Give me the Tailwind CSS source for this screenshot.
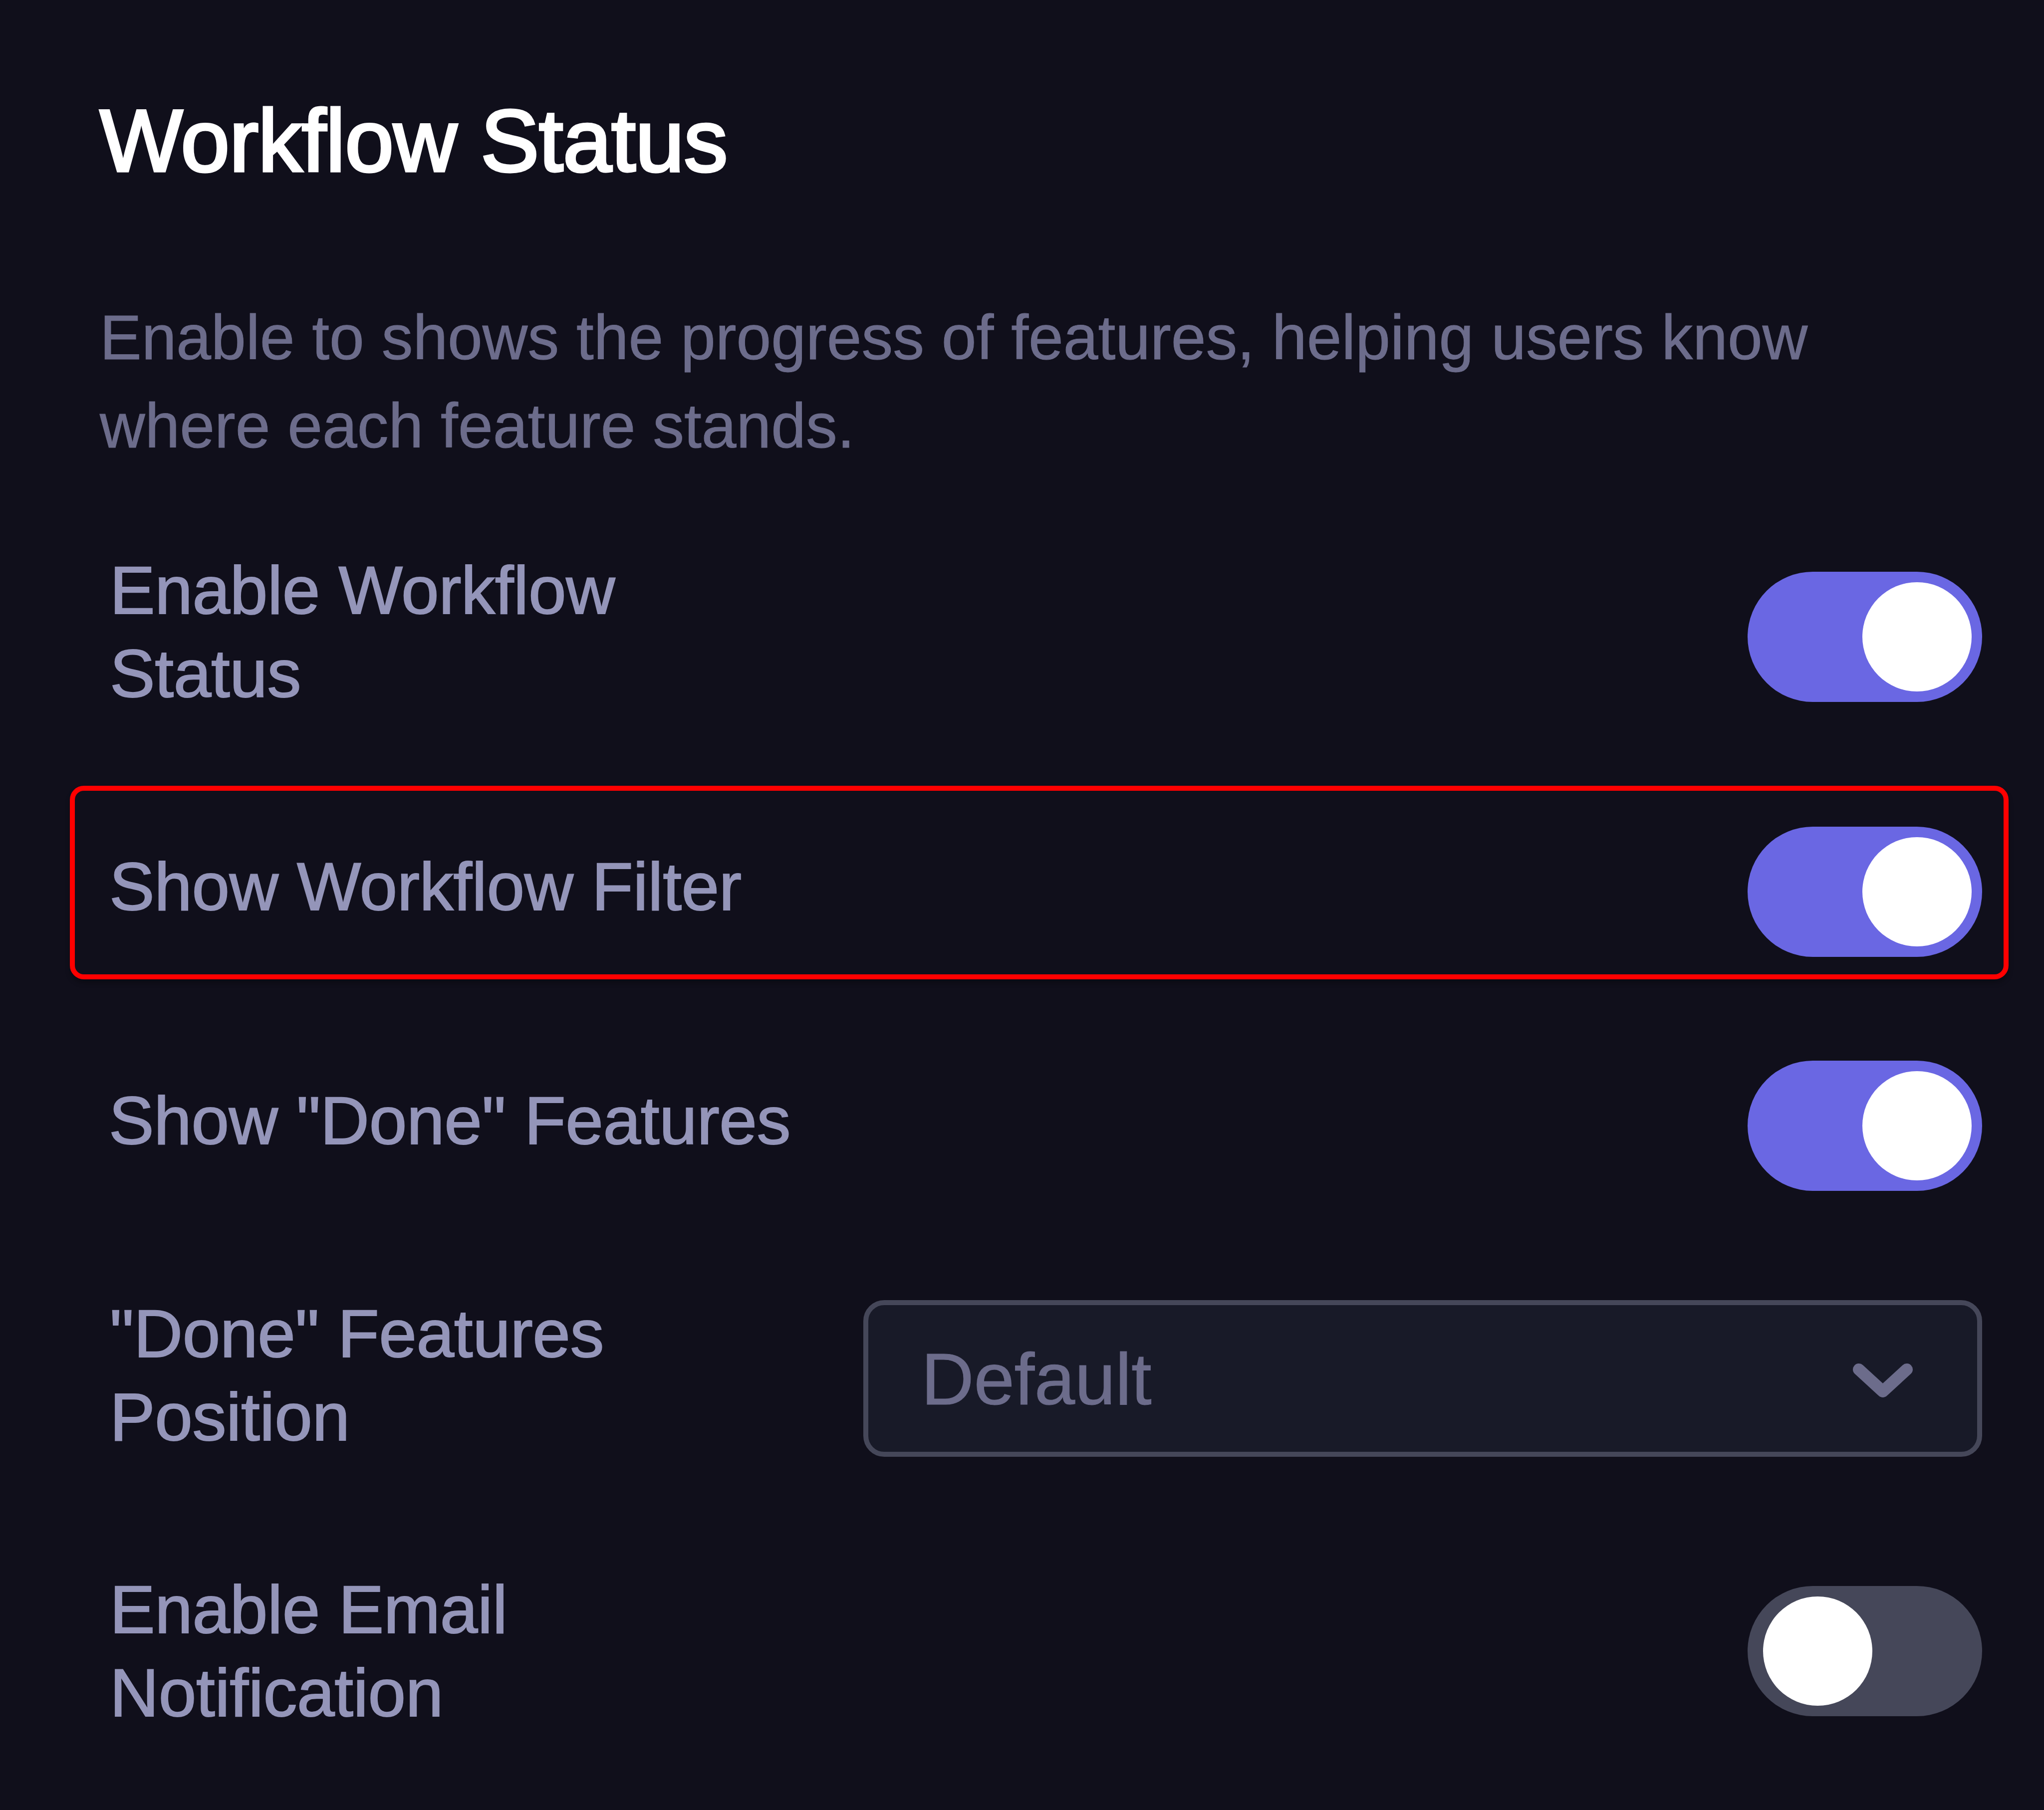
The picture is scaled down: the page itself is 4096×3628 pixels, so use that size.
<!DOCTYPE html>
<html lang="en">
<head>
  <meta charset="UTF-8" />
  <meta name="viewport" content="width=device-width, initial-scale=1" />
  <title>Workflow Status</title>
  <script src="https://cdn.jsdelivr.net/npm/@tailwindcss/browser@4"></script>
  <style>
    body {
      font-family: 'Liberation Sans', Arial, sans-serif;
    }
  </style>
</head>
<body class="bg-[#100f1b] w-[4096px] h-[3628px] overflow-hidden">
  <main class="flex flex-col pt-[182px]">
    <header class="pl-[200px]">
      <h1 class="text-[176px] leading-[200px] tracking-[-0.7px] text-white whitespace-nowrap [-webkit-text-stroke:5px_white]">Workflow Status</h1>
      <p class="mt-[206px] text-[125.4px] leading-[177px] text-[#6c6c8b] whitespace-nowrap [-webkit-text-stroke:1px_#6c6c8b]">Enable to shows the progress of features, helping users know<br />where each feature stands.</p>
    </header>

    <!-- Settings -->
    <section class="flex flex-col mt-[160px] pl-[140px] pr-[71px] text-[136px] leading-[167px] tracking-[-0.4px] text-[#9495b9] whitespace-nowrap [-webkit-text-stroke:2px_#9495b9]">
      <div class="flex justify-between items-start h-[473px] pl-[80px] pr-[53px]">
        <span class="-mt-[2px]">Enable Workflow<br />Status</span>
        <div class="flex justify-end mt-[44px] w-[470px] h-[261px] p-[21px] rounded-full bg-[#6a67e3]">
          <div class="size-[219px] rounded-full bg-white"></div>
        </div>
      </div>

      <div class="flex justify-between items-start h-[388px] pl-[69px] pr-[43px] border-[10px] border-[#ff0000] rounded-[28px] shadow-[0_8px_10px_rgba(0,0,0,0.25)]">
        <span class="mt-[109px]">Show Workflow Filter</span>
        <div class="flex justify-end mt-[72px] w-[470px] h-[261px] p-[21px] rounded-full bg-[#6a67e3]">
          <div class="size-[219px] rounded-full bg-white"></div>
        </div>
      </div>

      <div class="flex justify-between items-start mt-[163px] h-[480px] pl-[78px] pr-[53px]">
        <span class="mt-[37px]">Show "Done" Features</span>
        <div class="flex justify-end w-[470px] h-[261px] p-[21px] rounded-full bg-[#6a67e3]">
          <div class="size-[219px] rounded-full bg-white"></div>
        </div>
      </div>

      <div class="flex justify-between items-start h-[573px] pl-[80px] pr-[53px]">
        <span class="-mt-[16px]">"Done" Features<br />Position</span>
        <div class="flex justify-between items-center w-[2242px] h-[314px] pl-[106px] pr-[126px] border-[10.5px] border-[#454759] rounded-[42px] bg-[#181a28] text-[146.5px] text-[#6c6c8b] [-webkit-text-stroke:1px_#6c6c8b]">
          <span class="mt-[2px]">Default</span>
          <svg class="mt-[10px] w-[126px] h-[76px]" viewBox="0 0 126 76" fill="none" stroke="#6c6c8b" stroke-width="24" stroke-linecap="round" stroke-linejoin="round">
            <path d="M15 15 L63 59 L111 15" />
          </svg>
        </div>
      </div>

      <div class="flex justify-between items-start pl-[80px] pr-[53px]">
        <span class="-mt-[36px]">Enable Email<br />Notification</span>
        <div class="flex w-[470px] h-[261px] py-[21px] pl-[31px] rounded-full bg-[#454759]">
          <div class="size-[219px] rounded-full bg-white"></div>
        </div>
      </div>
    </section>
  </main>
</body>
</html>
